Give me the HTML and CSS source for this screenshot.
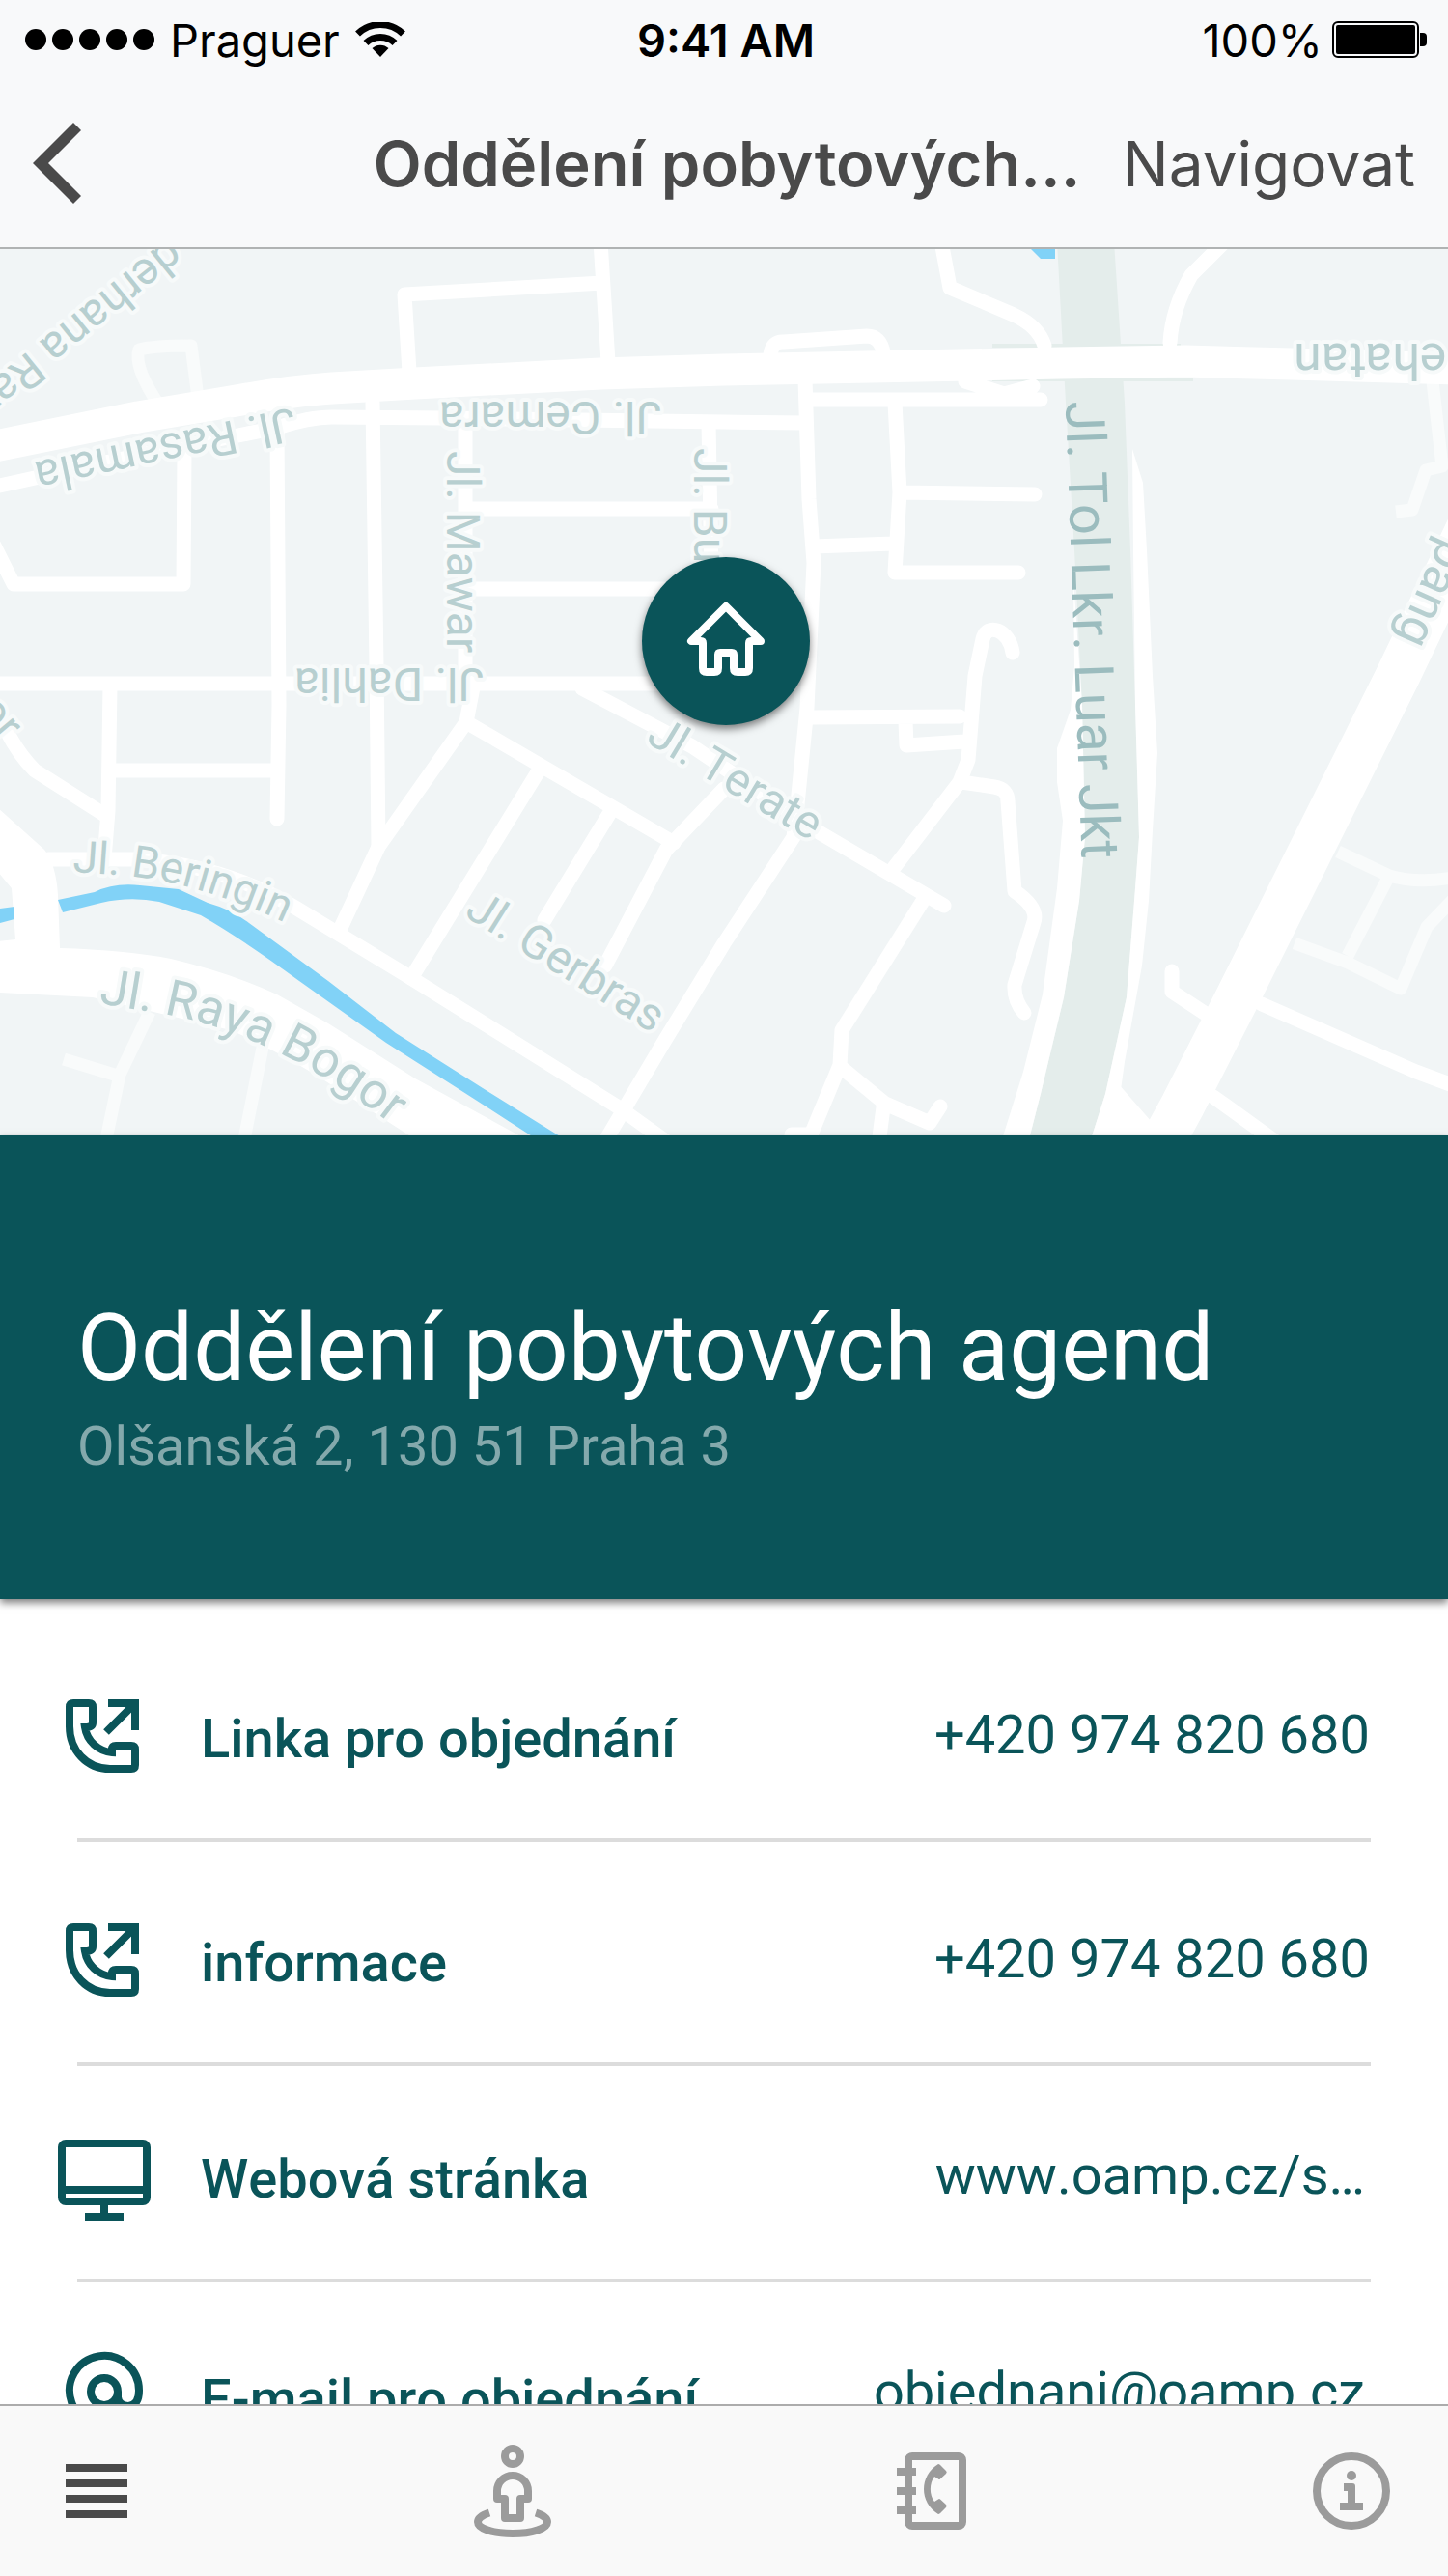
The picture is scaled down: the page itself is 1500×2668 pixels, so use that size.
FILE: index.html
```html
<!DOCTYPE html>
<html lang="cs">
<head>
<meta charset="utf-8">
<meta name="viewport" content="width=device-width, initial-scale=1">
<title>Oddělení pobytových agend</title>
<link rel="stylesheet" href="styles.css">
</head>
<body>
<div class="app">
  <header class="topbar">
    <div class="status">
      <div class="status-left">
        <span class="signal"><i></i><i></i><i></i><i></i><i></i></span>
        <span>Praguer</span>
        <svg class="wifi" viewBox="0 0 52 36" aria-hidden="true">
          <path d="M26 36 L17.500 27 A12.500 12.500 0 0 1 34.500 27 Z"/>
          <path class="arc" d="M11 21.500 A21.500 21.500 0 0 1 41 21.500"/>
          <path class="arc" d="M2.500 12 A34 34 0 0 1 49.500 12"/>
        </svg>
      </div>
      <time class="clock">9:41 AM</time>
      <div class="status-right">
        <span>100%</span>
        <svg class="battery" viewBox="0 0 98 38" aria-hidden="true">
          <rect x="1" y="1" width="88" height="36" rx="5" fill="none" stroke="#000" stroke-width="2"/>
          <rect x="4" y="4" width="82" height="30" rx="2"/>
          <path d="M91 12 h3 a4 4 0 0 1 4 4 v6 a4 4 0 0 1 -4 4 h-3 Z"/>
        </svg>
      </div>
    </div>
    <div class="nav">
      <button class="back" type="button" aria-label="Zpět">
        <svg viewBox="0 0 50 84" aria-hidden="true"><path d="M42 0 L50 8 L16 42 L50 76 L42 84 L0 42 Z"/></svg>
      </button>
      <h1 class="nav-title">Oddělení pobytových...</h1>
      <a class="nav-action" href="#mapa">Navigovat</a>
    </div>
  </header>

  <main class="content">
    <svg class="map" id="mapa" viewBox="0 258 1500 918" preserveAspectRatio="xMidYMid slice" role="img" aria-label="Mapa">
      <defs>
        <path id="beringin" d="M75 903 L118 906 Q206 912 304 960"/>
        <path id="bogor" d="M102 1039 L150 1047 Q215 1056 273 1083 Q345 1115 425 1180"/>
      </defs>
      <rect y="250" width="1500" height="940" fill="#f1f5f6"/>
      <path fill="#e4edeb" d="M1095 250 H1154 L1165 417 L1171 570 L1176 730 L1180 867 L1175 933 L1167 1033 L1145 1133 L1130 1180 H1066 L1078 1133 L1102 1033 L1118 933 L1124 867 L1121 730 L1113 570 L1104 417 Z"/>
      <path fill="#e4edeb" d="M1028 356 h195 v4 h-195 Z M1028 391 h208 v4 h-208 Z"/>

      <g class="road-faint">
        <path d="M165 420 Q138 380 144 362 Q160 358 198 358 L205 412"/>
        <path d="M155 1048 L124 1113 L110 1180 M66 1097 L125 1115 M273 1080 L253 1180"/>
        <path d="M1484 395 L1494 483 L1477 487 L1463 528 L1446 530"/>
        <path d="M1386 882 L1439 907 Q1470 916 1510 908 M1439 907 L1396 990 M1341 977 L1396 997 L1451 1024 L1478 960 L1505 932"/>
      </g>

      <g class="road">
        <path d="M622 250 L630 375 M624 293 L419 305 L424 385"/>
        <path d="M-5 504 L150 470 L287 443 Q320 432 344 432 L459 433 L750 437 L834 438"/>
        <path d="M287 445 L289 730 L287 848 M386 417 L390 690 L392 877 M191 467 L190 605 L14 605 L-6 565"/>
        <path d="M482 440 V707 M482 527 H737 M734 438 L737 600 M482 610 H690 M-5 708 H690"/>
        <path d="M114 710 L112 840 L108 890 M114 798 H287"/>
        <path d="M6 755 Q18 780 36 798 L110 845"/>
        <path d="M490 712 L483 748 L392 877 L352 963 M483 748 L698 873 M560 795 L426 1013 M631 843 L564 953 M750 817 L690 880 L627 1000"/>
        <path d="M603 713 L717 773 L850 863 L978 938"/>
        <path d="M50 890 H139 Q230 895 306 940 L421 1010 L641 1147 L694 1185"/>
        <path d="M834 393 L838 517 L843 583 L836 733 L826 833 L822 867 L750 977 L689 1077 L625 1185"/>
        <path d="M798 367 Q800 353 812 354 L898 348 Q912 348 915 365"/>
        <path d="M838 414 H1078 M1000 395 L1040 408 L1070 400 M927 417 L932 510 L927 593 H1055 M932 510 L1072 512 M843 566 L925 563"/>
        <path d="M975 250 L984 298 L1050 326 Q1076 338 1082 358 M1269 250 L1234 285 Q1214 320 1212 355"/>
        <path d="M1049 676 C1046 652 1022 644 1018 662 L1010 700 L1003 787 L994 810 L925 900 M841 743 L994 742 M938 747 L939 772 L999 768"/>
        <path d="M996 810 L1030 815 Q1044 817 1044 830 L1051 923 Q1076 940 1071 955 L1051 1020 Q1050 1036 1061 1049"/>
        <path d="M956 933 L872 1067 L870 1103 L836 1185 M872 1106 L917 1143 L963 1163 L974 1146 M915 1147 L910 1185 M820 1175 h20"/>
        <path d="M1214 1006 V1027 L1252 1052 M1307 1040 L1467 1110 L1510 1126 M1257 1136 L1325 1185 M1155 1130 L1190 1170 H1220"/>
      </g>

      <g fill="#fff">
        <path d="M1112 600 L1113 690 L1109 735 L1095 775 V810 L1101 850 L1095 920 L1080 1030 L1060 1110 L1038 1180 H1066 L1078 1133 L1102 1033 L1118 933 L1124 867 L1121 730 Z"/>
        <path d="M1173 465 L1184 500 L1188 570 L1194 700 L1199 780 L1194 860 L1190 933 L1183 1000 L1165 1100 L1160 1136 L1195 1180 H1130 L1145 1133 L1167 1033 L1175 933 L1180 867 L1176 730 L1174 570 Z"/>
        <path d="M-2 837 L46 880 Q58 895 60 927 L62 982 Q130 984 177 993 Q240 1008 287 1030 L340 1060 L430 1117 L545 1180 H430 L330 1115 Q280 1085 239 1067 L96 1033 L-2 1028 V975 L16 973 L12 920 L-2 903 Z"/>
      </g>
      <path class="road-main" d="M-10 463 L143 432 L239 416 Q300 405 344 402 L430 397 L622 387 L750 383 L1099 376 L1228 374 L1338 377 L1510 382"/>
      <path class="road-wide" d="M1522 545 L1448 700 L1282 1033 L1225 1145 L1195 1200"/>

      <path fill="#81d2f7" d="M60 932 L98 924 Q118 914 145 917 L185 921 L215 935 Q240 942 258 956 L340 1016 L410 1070 L500 1127 L585 1180 H556 L480 1131 L400 1080 L310 1016 Q250 972 208 948 L165 934 Q135 928 105 935 L65 945 Z"/>
      <path fill="#81d2f7" d="M0 941 L15 939 V952 L0 956 Z"/>
      <path fill="#81d2f7" d="M1068 250 H1093 V268 H1078 L1068 258 Z"/>

      <g class="label">
        <text transform="translate(174 246) rotate(141)">derhana Raya</text>
        <text transform="translate(303 422) rotate(168)">Jl. Rasamala</text>
        <text transform="translate(685 416) rotate(180)">Jl. Cemara</text>
        <text transform="translate(501 692) rotate(180)">Jl. Dahlia</text>
        <text transform="translate(463 467) rotate(90)">Jl. Mawar</text>
        <text transform="translate(719 464) rotate(90)">Jl. Bu</text>
        <text transform="translate(668 768) rotate(31)">Jl. Terate</text>
        <text transform="translate(480 948) rotate(32)">Jl. Gerbras</text>
        <text transform="translate(2 770) rotate(50)" text-anchor="end">or</text>
        <text class="label-small"><textPath href="#beringin">Jl. Beringin</textPath></text>
        <text class="label-large"><textPath href="#bogor">Jl. Raya Bogor</textPath></text>
        <text class="label-large" transform="translate(1340 356) rotate(180)" text-anchor="end">ehatan</text>
        <text class="label-large" transform="translate(1446 661) rotate(114)" text-anchor="end">pang</text>
      </g>
      <text class="label-highway" transform="translate(1104 416) rotate(88)">Jl. Tol Lkr. Luar Jkt</text>

      <g class="pin">
        <circle cx="752" cy="664" r="87"/>
        <path d="M752 628 L716 664 H726 Q728 664 728 666 V692 Q728 696 732 696 H740 Q744 696 744 692 V678 Q744 676 746 676 H758 Q760 676 760 678 V692 Q760 696 764 696 H772 Q776 696 776 692 V666 Q776 664 778 664 H788 Z"/>
      </g>
    </svg>

    <section class="hero">
      <h2>Oddělení pobytových agend</h2>
      <p>Olšanská 2, 130 51 Praha 3</p>
    </section>

    <ul class="contacts">
      <li class="tall">
        <svg class="icon" viewBox="0 0 96 84" aria-hidden="true">
          <path d="M36 24 V8 Q36 4 32 4 H16 Q12 4 12 8 V28 C12 53 30 72 54 72 H76 Q80 72 80 68 V52 Q80 48 76 48 H60 Q56 48 56 52 V55 C42 54 30 43 28 29 Q36 29 36 24 Z"/>
          <path d="M52 4 H80 V32 M79 5 L50 34"/>
        </svg>
        <span class="name">Linka pro objednání</span>
        <a class="value" href="tel:+420974820680">+420 974 820 680</a>
      </li>
      <li class="tall">
        <svg class="icon" viewBox="0 0 96 84" aria-hidden="true">
          <path d="M36 24 V8 Q36 4 32 4 H16 Q12 4 12 8 V28 C12 53 30 72 54 72 H76 Q80 72 80 68 V52 Q80 48 76 48 H60 Q56 48 56 52 V55 C42 54 30 43 28 29 Q36 29 36 24 Z"/>
          <path d="M52 4 H80 V32 M79 5 L50 34"/>
        </svg>
        <span class="name">informace</span>
        <a class="value" href="tel:+420974820680">+420 974 820 680</a>
      </li>
      <li>
        <svg class="icon" viewBox="0 0 96 84" aria-hidden="true">
          <rect x="4" y="4" width="88" height="60" rx="4"/>
          <path d="M4 52 H92 M48 64 V80 M28 80 H68"/>
        </svg>
        <span class="name">Webová stránka</span>
        <a class="value" href="#web">www.oamp.cz/s…</a>
      </li>
      <li class="mail">
        <svg class="icon" viewBox="0 0 96 84" aria-hidden="true">
          <circle cx="48" cy="37" r="14"/>
          <path d="M62 37 V43 Q63 52 73 52 Q84 51 84 36 A36 36 0 1 0 66 67"/>
        </svg>
        <span class="name">E-mail pro objednání</span>
        <a class="value" href="mailto:objednani@oamp.cz">objednani@oamp.cz</a>
      </li>
    </ul>
  </main>

  <nav class="tabs">
    <a class="active" href="#seznam" aria-label="Seznam">
      <svg width="64" height="56" viewBox="0 0 64 56" aria-hidden="true"><path d="M0 4 H64 M0 20 H64 M0 36 H64 M0 52 H64"/></svg>
    </a>
    <a href="#poloha" aria-label="Poloha">
      <svg width="80" height="96" viewBox="0 0 80 96" aria-hidden="true">
        <circle cx="40" cy="12" r="8"/>
        <path stroke-linejoin="round" d="M24 48 V56 H32 V76 H48 V56 H56 V48 A16 16 0 0 0 24 48 Z"/>
        <path d="M16 70.500 C8 73 4 76.500 4 80 C4 87 20 92 40 92 S76 87 76 80 C76 76.500 72 73 64 70.500"/>
      </svg>
    </a>
    <a href="#adresar" aria-label="Adresář">
      <svg width="72" height="80" viewBox="0 0 72 80" aria-hidden="true">
        <rect x="12" y="4" width="56" height="72" rx="4"/>
        <path d="M0 20 H20 M0 40 H20 M0 60 H20"/>
        <path class="solid" d="M43 12 Q44 12 45 13 L51 19 Q52.500 20.500 51 22 L45 27.500 Q44 28.500 43 27.500 L39 25 C33.500 32 33.500 44 39 51 L43 48.500 Q44 47.500 45 48.500 L51 54 Q52.500 55.500 51 57 L45 63 Q44 64 43 64 C23 52 23 24 43 12 Z"/>
      </svg>
    </a>
    <a href="#info" aria-label="Informace">
      <svg width="80" height="80" viewBox="0 0 80 80" aria-hidden="true">
        <circle cx="40" cy="40" r="36"/>
        <circle class="solid" cx="40" cy="24" r="5"/>
        <path class="solid" d="M32 32 H41 Q44 32 44 35 V52 H52 V60 H28 V52 H36 V40 H32 Z"/>
      </svg>
    </a>
  </nav>
</div>
</body>
</html>
```
FILE: styles.css
```css
* {
  box-sizing: border-box;
}

body {
  margin: 0;
  background: #fff;
  color: #0a5459;
  font-family: Roboto, "Liberation Sans", sans-serif;
  font-kerning: none;
}

h1,
h2,
p,
ul {
  margin: 0;
  padding: 0;
}

a {
  color: inherit;
  text-decoration: none;
}

svg {
  display: block;
}

.app {
  display: flex;
  flex-direction: column;
  height: 100vh;
}

/* Status and navigation */
.topbar {
  flex: none;
  background: #f8f9fa;
  border-bottom: 2px solid #b0b3b3;
  font-family: Inter, "Liberation Sans", sans-serif;
  font-kerning: normal;
}

.status {
  display: grid;
  grid-template-columns: 1fr auto 1fr;
  align-items: center;
  height: 82px;
  padding: 0 22px 0 26px;
  color: #000;
  font-size: 47px;
}

.status-left,
.status-right {
  display: flex;
  align-items: center;
}

.status-left {
  gap: 16px;
}

.status-right {
  justify-content: flex-end;
  gap: 10px;
}

.signal {
  display: flex;
  gap: 6px;
}

.signal i {
  width: 22px;
  height: 22px;
  border-radius: 50%;
  background: #000;
}

.wifi {
  width: 52px;
  height: 36px;
}

.wifi .arc {
  fill: none;
  stroke: #000;
  stroke-width: 7;
}

.battery {
  width: 98px;
  height: 38px;
}

.clock {
  font-weight: 600;
}

.nav {
  display: flex;
  align-items: center;
  height: 174px;
  padding: 0 34px;
  color: #4a4a4a;
  font-size: 64px;
}

.back {
  padding: 0;
  border: 0;
  background: none;
}

.back svg {
  width: 50px;
  height: 84px;
  fill: #4a4a4a;
}

.nav-title {
  flex: 1;
  min-width: 0;
  margin-right: 43px;
  font-size: 65px;
  font-weight: 600;
  text-align: right;
  white-space: nowrap;
}

/* Map */
.content {
  flex: 1;
  min-height: 0;
  overflow-y: auto;
  scrollbar-width: none;
}

.map {
  width: 100%;
  aspect-ratio: 1500 / 918;
}

.road,
.road-faint,
.road-main,
.road-wide {
  fill: none;
  stroke: #fff;
  stroke-width: 15;
  stroke-linejoin: round;
}

.road {
  stroke-linecap: round;
}

.road-faint {
  stroke: #f9fbfb;
  stroke-width: 13;
}

.road-main {
  stroke-width: 33;
}

.road-wide {
  stroke-width: 46;
}

.label,
.label-highway {
  fill: #b7cfd0;
  font-size: 48px;
}

.label {
  stroke: #f7fafa;
  stroke-width: 8;
  stroke-linejoin: round;
  paint-order: stroke;
}

.label-small {
  font-size: 46px;
}

.label-large {
  font-size: 52px;
}

.label-highway {
  fill: #9bbcbe;
  font-size: 56px;
}

.pin {
  fill: #0a5459;
  filter: drop-shadow(0 4px 4px rgba(0, 0, 0, 0.5));
}

.pin path {
  fill: none;
  stroke: #fff;
  stroke-width: 8;
  stroke-linejoin: round;
}

/* Place heading */
.hero {
  position: relative;
  padding: 160px 80px 122px;
  background: #0a5459;
  box-shadow: 0 4px 8px rgba(0, 0, 0, 0.5);
  color: #fff;
}

.hero h2 {
  font-size: 96px;
  font-weight: 400;
  line-height: 120px;
}

.hero p {
  margin-top: 6px;
  color: #84a9ac;
  font-size: 56px;
  line-height: 72px;
}

/* Contact rows */
.contacts {
  padding: 20px 80px 0;
  list-style: none;
}

.contacts li {
  display: flex;
  align-items: flex-start;
  height: 224px;
  padding-top: 76px;
  border-bottom: 4px solid #dcdcdc;
  font-size: 56px;
  line-height: 66px;
}

.contacts .tall {
  height: 232px;
  padding-top: 84px;
}

.icon {
  flex: none;
  width: 96px;
  height: 84px;
  margin: 0 52px 0 -20px;
  overflow: visible;
  fill: none;
  stroke: #0a5459;
  stroke-width: 8;
}

.name {
  flex: 1;
  padding-top: 8px;
  font-weight: 500;
}

.mail .name {
  padding-top: 12px;
}

.value {
  padding: 4px 6px 0 0;
}

.tall .value {
  padding-right: 1px;
}

/* Bottom tabs */
.tabs {
  display: flex;
  flex: none;
  align-items: center;
  justify-content: space-between;
  height: 178px;
  padding: 0 60px 0 68px;
  border-top: 2px solid #acacac;
  background: #f9f9f9;
}

.tabs svg {
  fill: none;
  stroke: #9b9b9b;
  stroke-width: 8;
}

.tabs .active svg {
  stroke: #4a4a4a;
}

.tabs .solid {
  fill: #9b9b9b;
  stroke: none;
}
```
